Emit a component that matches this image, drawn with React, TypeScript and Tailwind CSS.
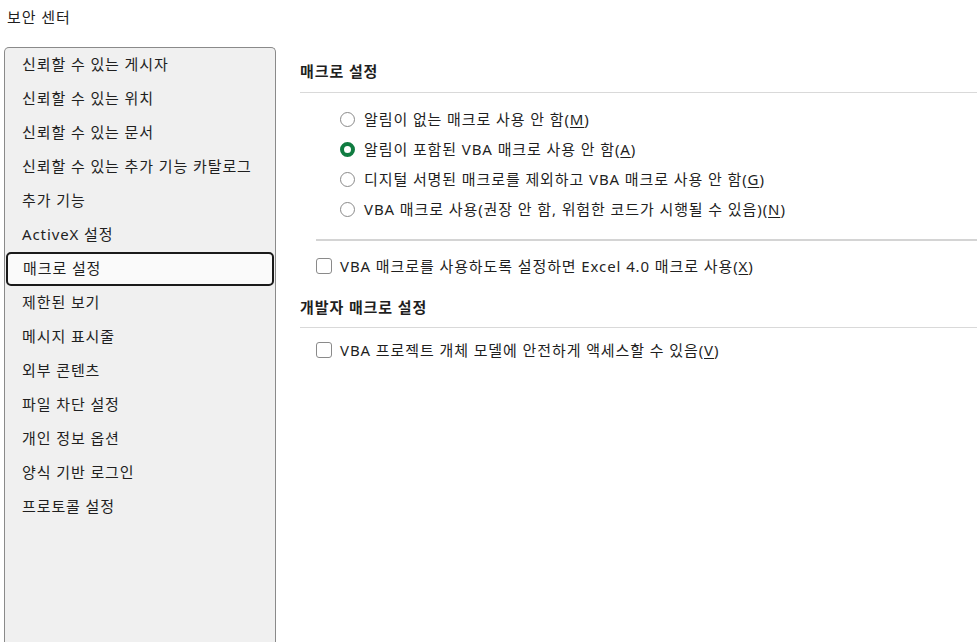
// 보안 센터 > 매크로 설정 화면
const FONT = "font-['Noto_Sans','Noto_Sans_CJK_KR',sans-serif]";

const navItems = [
  "신뢰할 수 있는 게시자",
  "신뢰할 수 있는 위치",
  "신뢰할 수 있는 문서",
  "신뢰할 수 있는 추가 기능 카탈로그",
  "추가 기능",
  "ActiveX 설정",
  "매크로 설정",
  "제한된 보기",
  "메시지 표시줄",
  "외부 콘텐츠",
  "파일 차단 설정",
  "개인 정보 옵션",
  "양식 기반 로그인",
  "프로토콜 설정",
];

function Label({ text, hot }: { text: string; hot: string }) {
  return (
    <span>
      {text}(<span className="underline underline-offset-2">{hot}</span>)
    </span>
  );
}

function Radio({ checked = false, children }: { checked?: boolean; children: React.ReactNode }) {
  return (
    <div className="flex h-[30px] items-center gap-[9px]">
      {checked ? (
        <span className="h-[15px] w-[15px] rounded-full border-[4px] border-[#107c41] bg-white" />
      ) : (
        <span className="h-[15px] w-[15px] rounded-full border border-[#8a8a8a] bg-white" />
      )}
      {children}
    </div>
  );
}

function Check({ children }: { children: React.ReactNode }) {
  return (
    <div className="flex items-center gap-[8px] pl-[16px]">
      <span className="h-[16px] w-[16px] rounded-[3px] border border-[#8a8a8a] bg-white" />
      {children}
    </div>
  );
}

export default function App() {
  return (
    <div
      className={`${FONT} flex h-[642px] w-[977px] flex-col overflow-hidden bg-white text-[15px] tracking-[0.9px] text-[#1f1f1f]`}
    >
      <div className="flex h-[35px] items-center pl-[7px]">보안 센터</div>
      <div className="flex flex-1 gap-[24px] pl-[4px] pt-[12px]">
        <nav className="flex w-[272px] flex-col rounded-t-[5px] border border-b-0 border-[#8a8a8a] bg-[#f0f0f0] px-[1px]">
          {navItems.map((item) =>
            item === "매크로 설정" ? (
              <div
                key={item}
                className="flex h-[34px] items-center rounded-[5px] border-2 border-[#1a1a1a] bg-[#fafafa] pb-[2px] pl-[15px]"
              >
                {item}
              </div>
            ) : (
              <div key={item} className="flex h-[34px] items-center pb-[2px] pl-[16px]">
                {item}
              </div>
            )
          )}
        </nav>

        <main className="flex flex-1 flex-col">
          <h2 className="flex h-[36px] items-end pb-[1px] font-semibold">매크로 설정</h2>
          <div className="mt-[9px] h-px bg-[#d9d9d9]" />
          <div className="flex flex-col pl-[40px] pt-[11px]">
            <Radio>
              <Label text="알림이 없는 매크로 사용 안 함" hot="M" />
            </Radio>
            <Radio checked>
              <Label text="알림이 포함된 VBA 매크로 사용 안 함" hot="A" />
            </Radio>
            <Radio>
              <Label text="디지털 서명된 매크로를 제외하고 VBA 매크로 사용 안 함" hot="G" />
            </Radio>
            <Radio>
              <Label text="VBA 매크로 사용(권장 안 함, 위험한 코드가 시행될 수 있음)" hot="N" />
            </Radio>
          </div>
          <div className="ml-[16px] mt-[15px] h-[2px] bg-[#d4d4d4]" />
          <div className="pt-[14px]">
            <Check>
              <Label text="VBA 매크로를 사용하도록 설정하면 Excel 4.0 매크로 사용" hot="X" />
            </Check>
          </div>
          <h2 className="mt-[18px] font-semibold">개발자 매크로 설정</h2>
          <div className="mt-[9px] h-px bg-[#d9d9d9]" />
          <div className="pt-[11px]">
            <Check>
              <Label text="VBA 프로젝트 개체 모델에 안전하게 액세스할 수 있음" hot="V" />
            </Check>
          </div>
        </main>
      </div>
    </div>
  );
}
